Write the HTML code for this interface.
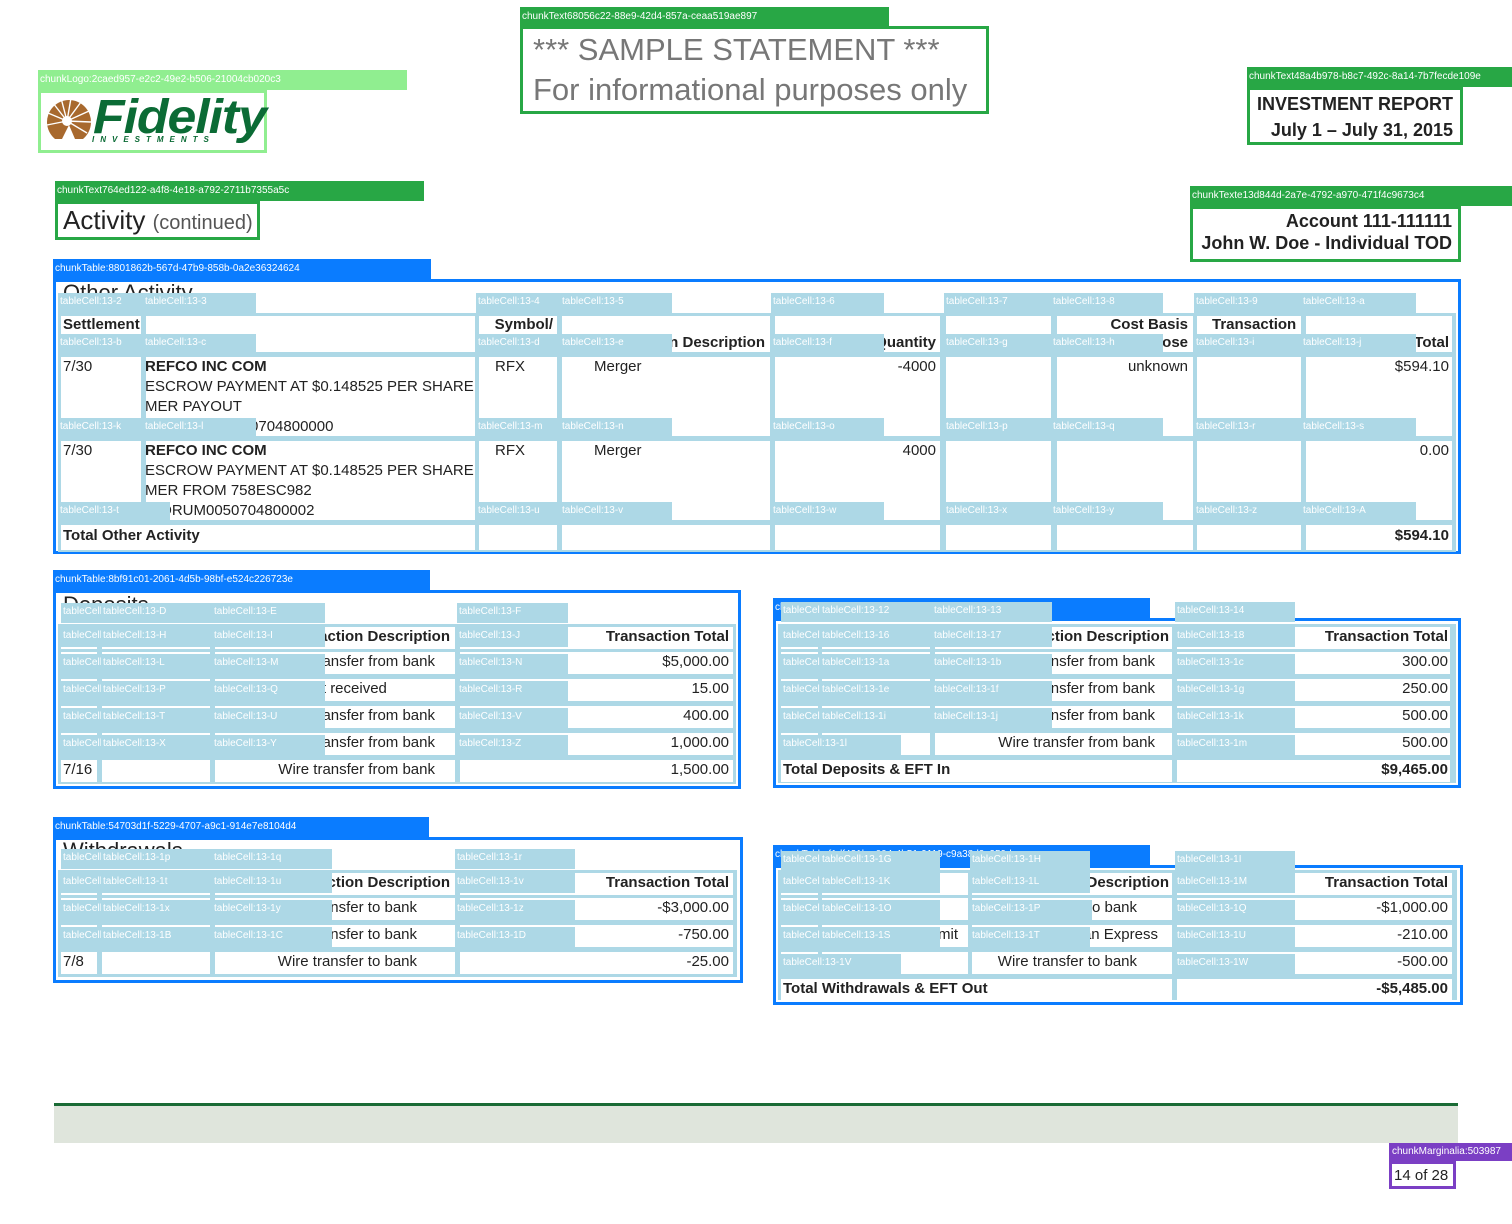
<!DOCTYPE html>
<html><head><meta charset="utf-8"><style>
body{margin:0;width:1512px;height:1224px;position:relative;background:#fff;font-family:"Liberation Sans",sans-serif;color:#222;overflow:hidden}
div{position:absolute;box-sizing:border-box}
.gl{background:#28a745;color:#fff;font-size:10px;line-height:20px;height:20px;padding-left:2px;white-space:nowrap;overflow:hidden}
.gb{border:3px solid #28a745;background:#fff}
.bl{background:#0a7cff;color:#fff;font-size:10px;line-height:20px;height:20px;padding-left:2px;white-space:nowrap;overflow:hidden}
.bb{border:3px solid #0a7cff}
.lb{background:#add8e6}
.w{background:#fff}
.L{background:#add8e6;color:#fff;font-size:10px;line-height:18px;height:20px;padding-left:2px;white-space:nowrap;overflow:hidden}
.t{font-size:15px;line-height:20px;white-space:nowrap}
.b{font-weight:bold}
.r{text-align:right}
</style></head><body>

<!-- header chunks -->
<div class="gl" style="left:520px;top:7px;width:369px">chunkText68056c22-88e9-42d4-857a-ceaa519ae897</div>
<div class="gb" style="left:520px;top:26px;width:469px;height:88px"></div>
<div class="t" style="left:533px;top:30px;font-size:31px;line-height:40px;color:#777">*** SAMPLE STATEMENT ***</div>
<div class="t" style="left:533px;top:70px;font-size:31px;line-height:40px;color:#777">For informational purposes only</div>

<div style="left:38px;top:70px;width:369px;height:20px;background:#90ee90;color:#fff;font-size:10px;line-height:20px;padding-left:2px;white-space:nowrap">chunkLogo:2caed957-e2c2-49e2-b506-21004cb020c3</div>
<div style="left:38px;top:90px;width:229px;height:63px;border:3px solid #90ee90"></div>
<svg style="position:absolute;left:45px;top:97px" width="48" height="44" viewBox="0 0 48 44">
<path d="M10 42 A22 22 0 1 1 38 42 L30 42 L24 28 L17 42 Z" fill="#a8692e"/>
<g stroke="#fff" stroke-width="1.4">
<line x1="22" y1="24" x2="3" y2="16"/><line x1="22" y1="24" x2="8" y2="6"/><line x1="22" y1="24" x2="16" y2="1"/><line x1="22" y1="24" x2="26" y2="1"/><line x1="22" y1="24" x2="36" y2="5"/><line x1="22" y1="24" x2="44" y2="14"/><line x1="22" y1="24" x2="46" y2="25"/><line x1="22" y1="24" x2="42" y2="36"/><line x1="22" y1="24" x2="2" y2="28"/></g>
<circle cx="22" cy="24" r="5" fill="#fff"/>
</svg>
<div style="left:93px;top:94px;font-size:48px;line-height:48px;font-weight:bold;font-style:italic;color:#0b6b35;letter-spacing:-1px;transform:scaleX(1.08);transform-origin:left">Fidelity</div>
<div style="left:92px;top:135px;font-size:8px;line-height:10px;font-weight:bold;font-style:italic;color:#0b6b35;letter-spacing:6px">INVESTMENTS</div>

<div class="gl" style="left:1247px;top:67px;width:265px">chunkText48a4b978-b8c7-492c-8a14-7b7fecde109e</div>
<div class="gb" style="left:1247px;top:87px;width:216px;height:58px"></div>
<div class="t b r" style="left:1250px;top:93px;width:203px;font-size:18px;line-height:22px">INVESTMENT REPORT</div>
<div class="t b r" style="left:1250px;top:119px;width:203px;font-size:18px;line-height:22px">July 1 – July 31, 2015</div>

<div class="gl" style="left:55px;top:181px;width:369px">chunkText764ed122-a4f8-4e18-a792-2711b7355a5c</div>
<div class="gb" style="left:55px;top:201px;width:205px;height:39px"></div>
<div class="t" style="left:63px;top:204px;font-size:26px;line-height:32px">Activity <span style="font-size:20px;color:#555">(continued)</span></div>

<div class="gl" style="left:1190px;top:186px;width:322px">chunkTexte13d844d-2a7e-4792-a970-471f4c9673c4</div>
<div class="gb" style="left:1190px;top:206px;width:271px;height:56px"></div>
<div class="t b r" style="left:1195px;top:210px;width:257px;font-size:18px;line-height:22px">Account 111-111111</div>
<div class="t b r" style="left:1195px;top:232px;width:257px;font-size:18px;line-height:22px">John W. Doe - Individual TOD</div>

<!-- TABLE 1 -->
<div class="bl" style="left:53px;top:259px;width:378px">chunkTable:8801862b-567d-47b9-858b-0a2e36324624</div>
<div class="bb" style="left:53px;top:279px;width:1408px;height:275px"></div>
<div class="t" style="left:63px;top:280px;font-size:22px;line-height:26px">Other Activity</div>
<div class="lb" style="left:58px;top:313px;width:1398px;height:239px"></div>
<div class="w" style="left:61px;top:316px;width:80px;height:36px"></div><div class="w" style="left:146px;top:316px;width:329px;height:36px"></div><div class="w" style="left:479px;top:316px;width:78px;height:36px"></div><div class="w" style="left:562px;top:316px;width:208px;height:36px"></div><div class="w" style="left:775px;top:316px;width:165px;height:36px"></div><div class="w" style="left:946px;top:316px;width:105px;height:36px"></div><div class="w" style="left:1057px;top:316px;width:136px;height:36px"></div><div class="w" style="left:1197px;top:316px;width:104px;height:36px"></div><div class="w" style="left:1306px;top:316px;width:146px;height:36px"></div>
<div class="w" style="left:61px;top:357px;width:80px;height:79px"></div><div class="w" style="left:146px;top:357px;width:329px;height:79px"></div><div class="w" style="left:479px;top:357px;width:78px;height:79px"></div><div class="w" style="left:562px;top:357px;width:208px;height:79px"></div><div class="w" style="left:775px;top:357px;width:165px;height:79px"></div><div class="w" style="left:946px;top:357px;width:105px;height:79px"></div><div class="w" style="left:1057px;top:357px;width:136px;height:79px"></div><div class="w" style="left:1197px;top:357px;width:104px;height:79px"></div><div class="w" style="left:1306px;top:357px;width:146px;height:79px"></div>
<div class="w" style="left:61px;top:441px;width:80px;height:79px"></div><div class="w" style="left:146px;top:441px;width:329px;height:79px"></div><div class="w" style="left:479px;top:441px;width:78px;height:79px"></div><div class="w" style="left:562px;top:441px;width:208px;height:79px"></div><div class="w" style="left:775px;top:441px;width:165px;height:79px"></div><div class="w" style="left:946px;top:441px;width:105px;height:79px"></div><div class="w" style="left:1057px;top:441px;width:136px;height:79px"></div><div class="w" style="left:1197px;top:441px;width:104px;height:79px"></div><div class="w" style="left:1306px;top:441px;width:146px;height:79px"></div>
<div class="w" style="left:61px;top:525px;width:414px;height:25px"></div><div class="w" style="left:479px;top:525px;width:78px;height:25px"></div><div class="w" style="left:562px;top:525px;width:208px;height:25px"></div><div class="w" style="left:775px;top:525px;width:165px;height:25px"></div><div class="w" style="left:946px;top:525px;width:105px;height:25px"></div><div class="w" style="left:1057px;top:525px;width:136px;height:25px"></div><div class="w" style="left:1197px;top:525px;width:104px;height:25px"></div><div class="w" style="left:1306px;top:525px;width:146px;height:25px"></div>
<div class="t b" style="left:63px;top:315px">Settlement</div>
<div class="t b r" style="left:480px;top:315px;width:73px">Symbol/</div>
<div class="t b r" style="left:590px;top:333px;width:175px">Transaction Description</div>
<div class="t b r" style="left:830px;top:333px;width:106px">Quantity</div>
<div class="t b r" style="left:1060px;top:315px;width:128px">Cost Basis</div>
<div class="t b r" style="left:1060px;top:333px;width:128px">Purpose</div>
<div class="t b" style="left:1212px;top:315px">Transaction</div>
<div class="t b r" style="left:1310px;top:333px;width:139px">Total</div>
<div class="t" style="left:63px;top:357px">7/30</div>
<div class="t b" style="left:145px;top:357px">REFCO INC COM</div>
<div class="t" style="left:145px;top:377px">ESCROW PAYMENT AT $0.148525 PER SHARE</div>
<div class="t" style="left:145px;top:397px">MER PAYOUT</div>
<div class="t" style="left:180px;top:417px">DRUM0050704800000</div>
<div class="t" style="left:495px;top:357px">RFX</div>
<div class="t" style="left:594px;top:357px">Merger</div>
<div class="t r" style="left:800px;top:357px;width:136px">-4000</div>
<div class="t r" style="left:1060px;top:357px;width:128px">unknown</div>
<div class="t r" style="left:1310px;top:357px;width:139px">$594.10</div>
<div class="t" style="left:63px;top:441px">7/30</div>
<div class="t b" style="left:145px;top:441px">REFCO INC COM</div>
<div class="t" style="left:145px;top:461px">ESCROW PAYMENT AT $0.148525 PER SHARE</div>
<div class="t" style="left:145px;top:481px">MER FROM 758ESC982</div>
<div class="t" style="left:161px;top:501px">DRUM0050704800002</div>
<div class="t" style="left:495px;top:441px">RFX</div>
<div class="t" style="left:594px;top:441px">Merger</div>
<div class="t r" style="left:800px;top:441px;width:136px">4000</div>
<div class="t r" style="left:1310px;top:441px;width:139px">0.00</div>
<div class="t b" style="left:63px;top:526px">Total Other Activity</div>
<div class="t b r" style="left:1310px;top:526px;width:139px">$594.10</div>
<div class="L" style="left:58px;top:293px;width:85px">tableCell:13-2</div><div class="L" style="left:143px;top:293px;width:113px">tableCell:13-3</div><div class="L" style="left:476px;top:293px;width:84px">tableCell:13-4</div><div class="L" style="left:560px;top:293px;width:112px">tableCell:13-5</div><div class="L" style="left:771px;top:293px;width:113px">tableCell:13-6</div><div class="L" style="left:944px;top:293px;width:107px">tableCell:13-7</div><div class="L" style="left:1051px;top:293px;width:112px">tableCell:13-8</div><div class="L" style="left:1194px;top:293px;width:107px">tableCell:13-9</div><div class="L" style="left:1301px;top:293px;width:115px">tableCell:13-a</div>
<div class="L" style="left:58px;top:334px;width:85px;height:18px">tableCell:13-b</div><div class="L" style="left:143px;top:334px;width:113px;height:18px">tableCell:13-c</div><div class="L" style="left:476px;top:334px;width:84px;height:18px">tableCell:13-d</div><div class="L" style="left:560px;top:334px;width:112px;height:18px">tableCell:13-e</div><div class="L" style="left:771px;top:334px;width:113px;height:18px">tableCell:13-f</div><div class="L" style="left:944px;top:334px;width:107px;height:18px">tableCell:13-g</div><div class="L" style="left:1051px;top:334px;width:112px;height:18px">tableCell:13-h</div><div class="L" style="left:1194px;top:334px;width:107px;height:18px">tableCell:13-i</div><div class="L" style="left:1301px;top:334px;width:115px;height:18px">tableCell:13-j</div>
<div class="L" style="left:58px;top:418px;width:85px;height:18px">tableCell:13-k</div><div class="L" style="left:143px;top:418px;width:113px;height:18px">tableCell:13-l</div><div class="L" style="left:476px;top:418px;width:84px;height:18px">tableCell:13-m</div><div class="L" style="left:560px;top:418px;width:112px;height:18px">tableCell:13-n</div><div class="L" style="left:771px;top:418px;width:113px;height:18px">tableCell:13-o</div><div class="L" style="left:944px;top:418px;width:107px;height:18px">tableCell:13-p</div><div class="L" style="left:1051px;top:418px;width:112px;height:18px">tableCell:13-q</div><div class="L" style="left:1194px;top:418px;width:107px;height:18px">tableCell:13-r</div><div class="L" style="left:1301px;top:418px;width:115px;height:18px">tableCell:13-s</div>
<div class="L" style="left:58px;top:502px;width:112px;height:18px">tableCell:13-t</div><div class="L" style="left:476px;top:502px;width:84px;height:18px">tableCell:13-u</div><div class="L" style="left:560px;top:502px;width:112px;height:18px">tableCell:13-v</div><div class="L" style="left:771px;top:502px;width:113px;height:18px">tableCell:13-w</div><div class="L" style="left:944px;top:502px;width:107px;height:18px">tableCell:13-x</div><div class="L" style="left:1051px;top:502px;width:112px;height:18px">tableCell:13-y</div><div class="L" style="left:1194px;top:502px;width:107px;height:18px">tableCell:13-z</div><div class="L" style="left:1301px;top:502px;width:115px;height:18px">tableCell:13-A</div>

<!-- DEPOSITS LEFT -->
<div class="bl" style="left:53px;top:570px;width:377px">chunkTable:8bf91c01-2061-4d5b-98bf-e524c226723e</div>
<div class="bb" style="left:53px;top:590px;width:688px;height:199px"></div>
<div class="t" style="left:63px;top:592px;font-size:22px;line-height:26px">Deposits</div>
<div class="lb" style="left:58px;top:624px;width:678px;height:160px"></div>
<div class="w" style="left:61px;top:627px;width:36px;height:22px"></div><div class="w" style="left:102px;top:627px;width:108px;height:22px"></div><div class="w" style="left:215px;top:627px;width:240px;height:22px"></div><div class="w" style="left:460px;top:627px;width:273px;height:22px"></div>
<div class="w" style="left:61px;top:652px;width:36px;height:22px"></div><div class="w" style="left:102px;top:652px;width:108px;height:22px"></div><div class="w" style="left:215px;top:652px;width:240px;height:22px"></div><div class="w" style="left:460px;top:652px;width:273px;height:22px"></div>
<div class="w" style="left:61px;top:679px;width:36px;height:22px"></div><div class="w" style="left:102px;top:679px;width:108px;height:22px"></div><div class="w" style="left:215px;top:679px;width:240px;height:22px"></div><div class="w" style="left:460px;top:679px;width:273px;height:22px"></div>
<div class="w" style="left:61px;top:706px;width:36px;height:22px"></div><div class="w" style="left:102px;top:706px;width:108px;height:22px"></div><div class="w" style="left:215px;top:706px;width:240px;height:22px"></div><div class="w" style="left:460px;top:706px;width:273px;height:22px"></div>
<div class="w" style="left:61px;top:733px;width:36px;height:22px"></div><div class="w" style="left:102px;top:733px;width:108px;height:22px"></div><div class="w" style="left:215px;top:733px;width:240px;height:22px"></div><div class="w" style="left:460px;top:733px;width:273px;height:22px"></div>
<div class="w" style="left:61px;top:760px;width:36px;height:22px"></div><div class="w" style="left:102px;top:760px;width:108px;height:22px"></div><div class="w" style="left:215px;top:760px;width:240px;height:22px"></div><div class="w" style="left:460px;top:760px;width:273px;height:22px"></div>
<div class="t b r" style="left:215px;top:627px;width:235px">Transaction Description</div><div class="t b r" style="left:460px;top:627px;width:269px">Transaction Total</div>
<div class="t r" style="left:215px;top:652px;width:220px">Wire transfer from bank</div><div class="t r" style="left:460px;top:652px;width:269px">$5,000.00</div>
<div class="t" style="left:276px;top:679px">Interest received</div><div class="t r" style="left:460px;top:679px;width:269px">15.00</div>
<div class="t r" style="left:215px;top:706px;width:220px">Wire transfer from bank</div><div class="t r" style="left:460px;top:706px;width:269px">400.00</div>
<div class="t r" style="left:215px;top:733px;width:220px">Wire transfer from bank</div><div class="t r" style="left:460px;top:733px;width:269px">1,000.00</div>
<div class="t" style="left:63px;top:760px">7/16</div><div class="t r" style="left:215px;top:760px;width:220px">Wire transfer from bank</div><div class="t r" style="left:460px;top:760px;width:269px">1,500.00</div>
<div class="L" style="left:61px;top:603px;width:40px">tableCell:13-C</div><div class="L" style="left:101px;top:603px;width:111px">tableCell:13-D</div><div class="L" style="left:212px;top:603px;width:113px">tableCell:13-E</div><div class="L" style="left:457px;top:603px;width:111px">tableCell:13-F</div>
<div class="L" style="left:61px;top:627px;width:40px">tableCell:13-G</div><div class="L" style="left:101px;top:627px;width:111px">tableCell:13-H</div><div class="L" style="left:212px;top:627px;width:113px">tableCell:13-I</div><div class="L" style="left:457px;top:627px;width:111px">tableCell:13-J</div>
<div class="L" style="left:61px;top:654px;width:40px">tableCell:13-K</div><div class="L" style="left:101px;top:654px;width:111px">tableCell:13-L</div><div class="L" style="left:212px;top:654px;width:113px">tableCell:13-M</div><div class="L" style="left:457px;top:654px;width:111px">tableCell:13-N</div>
<div class="L" style="left:61px;top:681px;width:40px">tableCell:13-O</div><div class="L" style="left:101px;top:681px;width:111px">tableCell:13-P</div><div class="L" style="left:212px;top:681px;width:113px">tableCell:13-Q</div><div class="L" style="left:457px;top:681px;width:111px">tableCell:13-R</div>
<div class="L" style="left:61px;top:708px;width:40px">tableCell:13-S</div><div class="L" style="left:101px;top:708px;width:111px">tableCell:13-T</div><div class="L" style="left:212px;top:708px;width:113px">tableCell:13-U</div><div class="L" style="left:457px;top:708px;width:111px">tableCell:13-V</div>
<div class="L" style="left:61px;top:735px;width:40px">tableCell:13-W</div><div class="L" style="left:101px;top:735px;width:111px">tableCell:13-X</div><div class="L" style="left:212px;top:735px;width:113px">tableCell:13-Y</div><div class="L" style="left:457px;top:735px;width:111px">tableCell:13-Z</div>

<!-- DEPOSITS RIGHT -->
<div class="bl" style="left:773px;top:598px;width:377px">chunkTable:5c240c93-9ee0-4981-b831-12a9ba4ff83e</div>
<div class="bb" style="left:773px;top:618px;width:688px;height:170px"></div>
<div class="lb" style="left:778px;top:624px;width:678px;height:159px"></div>
<div class="w" style="left:781px;top:627px;width:37px;height:22px"></div><div class="w" style="left:822px;top:627px;width:108px;height:22px"></div><div class="w" style="left:935px;top:627px;width:237px;height:22px"></div><div class="w" style="left:1177px;top:627px;width:273px;height:22px"></div>
<div class="w" style="left:781px;top:652px;width:37px;height:22px"></div><div class="w" style="left:822px;top:652px;width:108px;height:22px"></div><div class="w" style="left:935px;top:652px;width:237px;height:22px"></div><div class="w" style="left:1177px;top:652px;width:273px;height:22px"></div>
<div class="w" style="left:781px;top:679px;width:37px;height:22px"></div><div class="w" style="left:822px;top:679px;width:108px;height:22px"></div><div class="w" style="left:935px;top:679px;width:237px;height:22px"></div><div class="w" style="left:1177px;top:679px;width:273px;height:22px"></div>
<div class="w" style="left:781px;top:706px;width:37px;height:22px"></div><div class="w" style="left:822px;top:706px;width:108px;height:22px"></div><div class="w" style="left:935px;top:706px;width:237px;height:22px"></div><div class="w" style="left:1177px;top:706px;width:273px;height:22px"></div>
<div class="w" style="left:781px;top:733px;width:37px;height:22px"></div><div class="w" style="left:822px;top:733px;width:108px;height:22px"></div><div class="w" style="left:935px;top:733px;width:237px;height:22px"></div><div class="w" style="left:1177px;top:733px;width:273px;height:22px"></div>
<div class="w" style="left:781px;top:760px;width:391px;height:22px"></div><div class="w" style="left:1177px;top:760px;width:273px;height:22px"></div>
<div class="t b r" style="left:935px;top:627px;width:234px">Transaction Description</div><div class="t b r" style="left:1177px;top:627px;width:271px">Transaction Total</div>
<div class="t r" style="left:935px;top:652px;width:220px">Wire transfer from bank</div><div class="t r" style="left:1177px;top:652px;width:271px">300.00</div>
<div class="t r" style="left:935px;top:679px;width:220px">Wire transfer from bank</div><div class="t r" style="left:1177px;top:679px;width:271px">250.00</div>
<div class="t r" style="left:935px;top:706px;width:220px">Wire transfer from bank</div><div class="t r" style="left:1177px;top:706px;width:271px">500.00</div>
<div class="t r" style="left:935px;top:733px;width:220px">Wire transfer from bank</div><div class="t r" style="left:1177px;top:733px;width:271px">500.00</div>
<div class="t b" style="left:783px;top:760px">Total Deposits &amp; EFT In</div><div class="t b r" style="left:1177px;top:760px;width:271px">$9,465.00</div>
<div class="L" style="left:781px;top:602px;width:39px">tableCell:13-11</div><div class="L" style="left:820px;top:602px;width:112px">tableCell:13-12</div><div class="L" style="left:932px;top:602px;width:120px">tableCell:13-13</div><div class="L" style="left:1175px;top:602px;width:120px">tableCell:13-14</div>
<div class="L" style="left:781px;top:627px;width:39px">tableCell:13-15</div><div class="L" style="left:820px;top:627px;width:112px">tableCell:13-16</div><div class="L" style="left:932px;top:627px;width:120px">tableCell:13-17</div><div class="L" style="left:1175px;top:627px;width:120px">tableCell:13-18</div>
<div class="L" style="left:781px;top:654px;width:39px">tableCell:13-19</div><div class="L" style="left:820px;top:654px;width:112px">tableCell:13-1a</div><div class="L" style="left:932px;top:654px;width:120px">tableCell:13-1b</div><div class="L" style="left:1175px;top:654px;width:120px">tableCell:13-1c</div>
<div class="L" style="left:781px;top:681px;width:39px">tableCell:13-1d</div><div class="L" style="left:820px;top:681px;width:112px">tableCell:13-1e</div><div class="L" style="left:932px;top:681px;width:120px">tableCell:13-1f</div><div class="L" style="left:1175px;top:681px;width:120px">tableCell:13-1g</div>
<div class="L" style="left:781px;top:708px;width:39px">tableCell:13-1h</div><div class="L" style="left:820px;top:708px;width:112px">tableCell:13-1i</div><div class="L" style="left:932px;top:708px;width:120px">tableCell:13-1j</div><div class="L" style="left:1175px;top:708px;width:120px">tableCell:13-1k</div>
<div class="L" style="left:781px;top:735px;width:120px">tableCell:13-1l</div><div class="L" style="left:1175px;top:735px;width:120px">tableCell:13-1m</div>

<!-- WITHDRAWALS LEFT -->
<div class="bl" style="left:53px;top:817px;width:376px">chunkTable:54703d1f-5229-4707-a9c1-914e7e8104d4</div>
<div class="bb" style="left:53px;top:837px;width:690px;height:146px"></div>
<div class="t" style="left:63px;top:838px;font-size:22px;line-height:26px">Withdrawals</div>
<div class="lb" style="left:58px;top:870px;width:679px;height:107px"></div>
<div class="w" style="left:61px;top:873px;width:36px;height:22px"></div><div class="w" style="left:102px;top:873px;width:108px;height:22px"></div><div class="w" style="left:215px;top:873px;width:240px;height:22px"></div><div class="w" style="left:460px;top:873px;width:273px;height:22px"></div>
<div class="w" style="left:61px;top:898px;width:36px;height:22px"></div><div class="w" style="left:102px;top:898px;width:108px;height:22px"></div><div class="w" style="left:215px;top:898px;width:240px;height:22px"></div><div class="w" style="left:460px;top:898px;width:273px;height:22px"></div>
<div class="w" style="left:61px;top:925px;width:36px;height:22px"></div><div class="w" style="left:102px;top:925px;width:108px;height:22px"></div><div class="w" style="left:215px;top:925px;width:240px;height:22px"></div><div class="w" style="left:460px;top:925px;width:273px;height:22px"></div>
<div class="w" style="left:61px;top:952px;width:36px;height:22px"></div><div class="w" style="left:102px;top:952px;width:108px;height:22px"></div><div class="w" style="left:215px;top:952px;width:240px;height:22px"></div><div class="w" style="left:460px;top:952px;width:273px;height:22px"></div>
<div class="t b r" style="left:215px;top:873px;width:235px">Transaction Description</div><div class="t b r" style="left:460px;top:873px;width:269px">Transaction Total</div>
<div class="t r" style="left:215px;top:898px;width:202px">Wire transfer to bank</div><div class="t r" style="left:460px;top:898px;width:269px">-$3,000.00</div>
<div class="t r" style="left:215px;top:925px;width:202px">Wire transfer to bank</div><div class="t r" style="left:460px;top:925px;width:269px">-750.00</div>
<div class="t" style="left:63px;top:952px">7/8</div><div class="t r" style="left:215px;top:952px;width:202px">Wire transfer to bank</div><div class="t r" style="left:460px;top:952px;width:269px">-25.00</div>
<div class="L" style="left:61px;top:849px;width:40px">tableCell:13-1o</div><div class="L" style="left:101px;top:849px;width:111px">tableCell:13-1p</div><div class="L" style="left:212px;top:849px;width:120px">tableCell:13-1q</div><div class="L" style="left:455px;top:849px;width:120px">tableCell:13-1r</div>
<div class="L" style="left:61px;top:873px;width:40px">tableCell:13-1s</div><div class="L" style="left:101px;top:873px;width:111px">tableCell:13-1t</div><div class="L" style="left:212px;top:873px;width:120px">tableCell:13-1u</div><div class="L" style="left:455px;top:873px;width:120px">tableCell:13-1v</div>
<div class="L" style="left:61px;top:900px;width:40px">tableCell:13-1w</div><div class="L" style="left:101px;top:900px;width:111px">tableCell:13-1x</div><div class="L" style="left:212px;top:900px;width:120px">tableCell:13-1y</div><div class="L" style="left:455px;top:900px;width:120px">tableCell:13-1z</div>
<div class="L" style="left:61px;top:927px;width:40px">tableCell:13-1A</div><div class="L" style="left:101px;top:927px;width:111px">tableCell:13-1B</div><div class="L" style="left:212px;top:927px;width:120px">tableCell:13-1C</div><div class="L" style="left:455px;top:927px;width:120px">tableCell:13-1D</div>

<!-- WITHDRAWALS RIGHT -->
<div class="bl" style="left:773px;top:845px;width:377px">chunkTable:f1df421b-c004-4b51-9119-c9a38d9c259d</div>
<div class="bb" style="left:773px;top:865px;width:690px;height:140px"></div>
<div class="lb" style="left:778px;top:870px;width:679px;height:130px"></div>
<div class="w" style="left:781px;top:873px;width:37px;height:22px"></div><div class="w" style="left:822px;top:873px;width:146px;height:22px"></div><div class="w" style="left:972px;top:873px;width:200px;height:22px"></div><div class="w" style="left:1177px;top:873px;width:275px;height:22px"></div>
<div class="w" style="left:781px;top:898px;width:37px;height:22px"></div><div class="w" style="left:822px;top:898px;width:146px;height:22px"></div><div class="w" style="left:972px;top:898px;width:200px;height:22px"></div><div class="w" style="left:1177px;top:898px;width:275px;height:22px"></div>
<div class="w" style="left:781px;top:925px;width:37px;height:22px"></div><div class="w" style="left:822px;top:925px;width:146px;height:22px"></div><div class="w" style="left:972px;top:925px;width:200px;height:22px"></div><div class="w" style="left:1177px;top:925px;width:275px;height:22px"></div>
<div class="w" style="left:781px;top:952px;width:37px;height:22px"></div><div class="w" style="left:822px;top:952px;width:146px;height:22px"></div><div class="w" style="left:972px;top:952px;width:200px;height:22px"></div><div class="w" style="left:1177px;top:952px;width:275px;height:22px"></div>
<div class="w" style="left:781px;top:979px;width:391px;height:21px"></div><div class="w" style="left:1177px;top:979px;width:275px;height:21px"></div>
<div class="t b r" style="left:972px;top:873px;width:197px">Transaction Description</div><div class="t b r" style="left:1177px;top:873px;width:271px">Transaction Total</div>
<div class="t r" style="left:972px;top:898px;width:165px">Wire transfer to bank</div><div class="t r" style="left:1177px;top:898px;width:271px">-$1,000.00</div>
<div class="t r" style="left:822px;top:925px;width:136px">Credit Card Limit</div><div class="t r" style="left:972px;top:925px;width:186px">American Express</div><div class="t r" style="left:1177px;top:925px;width:271px">-210.00</div>
<div class="t r" style="left:972px;top:952px;width:165px">Wire transfer to bank</div><div class="t r" style="left:1177px;top:952px;width:271px">-500.00</div>
<div class="t b" style="left:783px;top:979px">Total Withdrawals &amp; EFT Out</div><div class="t b r" style="left:1177px;top:979px;width:271px">-$5,485.00</div>
<div class="L" style="left:781px;top:851px;width:39px">tableCell:13-1F</div><div class="L" style="left:820px;top:851px;width:120px">tableCell:13-1G</div><div class="L" style="left:970px;top:851px;width:120px">tableCell:13-1H</div><div class="L" style="left:1175px;top:851px;width:120px">tableCell:13-1I</div>
<div class="L" style="left:781px;top:873px;width:39px">tableCell:13-1J</div><div class="L" style="left:820px;top:873px;width:120px">tableCell:13-1K</div><div class="L" style="left:970px;top:873px;width:120px">tableCell:13-1L</div><div class="L" style="left:1175px;top:873px;width:120px">tableCell:13-1M</div>
<div class="L" style="left:781px;top:900px;width:39px">tableCell:13-1N</div><div class="L" style="left:820px;top:900px;width:120px">tableCell:13-1O</div><div class="L" style="left:970px;top:900px;width:122px">tableCell:13-1P</div><div class="L" style="left:1175px;top:900px;width:120px">tableCell:13-1Q</div>
<div class="L" style="left:781px;top:927px;width:39px">tableCell:13-1R</div><div class="L" style="left:820px;top:927px;width:120px">tableCell:13-1S</div><div class="L" style="left:970px;top:927px;width:120px">tableCell:13-1T</div><div class="L" style="left:1175px;top:927px;width:120px">tableCell:13-1U</div>
<div class="L" style="left:781px;top:954px;width:120px">tableCell:13-1V</div><div class="L" style="left:1175px;top:954px;width:120px">tableCell:13-1W</div>

<!-- footer -->
<div style="left:54px;top:1103px;width:1404px;height:3px;background:#1a6b35"></div>
<div style="left:54px;top:1106px;width:1404px;height:37px;background:#dfe5dc"></div>
<div style="left:1389px;top:1143px;width:123px;height:18px;background:#7b3fc4;color:#fff;font-size:10px;line-height:18px;padding-left:3px;white-space:nowrap;overflow:hidden">chunkMarginalia:503987</div>
<div style="left:1389px;top:1161px;width:67px;height:28px;border:3px solid #7b3fc4"></div>
<div class="t" style="left:1394px;top:1166px">14 of 28</div>
</body></html>
